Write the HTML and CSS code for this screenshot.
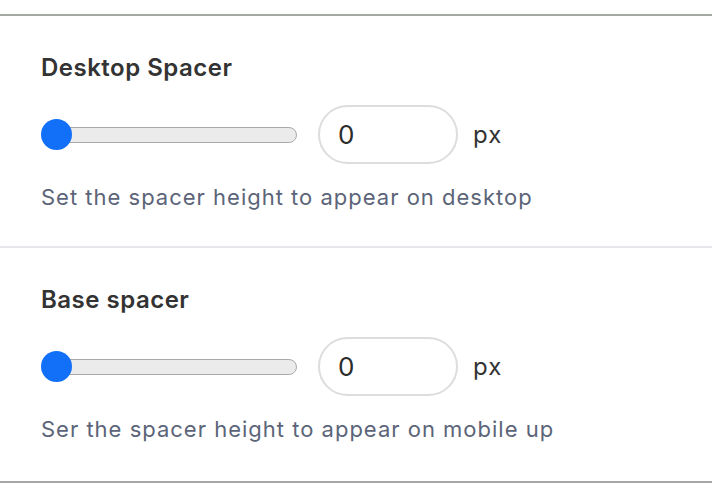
FILE: index.html
```html
<!DOCTYPE html>
<html>
<head>
<meta charset="utf-8">
<link rel="stylesheet" href="styles.css">
</head>
<body>
<div class="panel">
  <section class="field field-first">
    <h3 class="field-label">Desktop Spacer</h3>
    <div class="control-row">
      <div class="slider">
        <div class="slider-track"></div>
        <div class="slider-thumb"></div>
      </div>
      <div class="num-input">0</div>
      <span class="unit">px</span>
    </div>
    <p class="help">Set the spacer height to appear on desktop</p>
  </section>
  <section class="field field-second">
    <h3 class="field-label">Base spacer</h3>
    <div class="control-row">
      <div class="slider">
        <div class="slider-track"></div>
        <div class="slider-thumb"></div>
      </div>
      <div class="num-input">0</div>
      <span class="unit">px</span>
    </div>
    <p class="help">Ser the spacer height to appear on mobile up</p>
  </section>
</div>
</body>
</html>
```
FILE: styles.css
```css
html, body {
  margin: 0;
  padding: 0;
  background: #ffffff;
}
body {
  font-family: Inter, "Noto Sans", "Liberation Sans", sans-serif;
  padding-top: 14px;
}
.panel {
  border-top: 2px solid #a3a8a3;
  border-bottom: 2px solid #a6a6a6;
}
.field {
  padding: 38px 0 35px 41px;
  display: flex;
  flex-direction: column;
}
.field-first {
  border-bottom: 2px solid #e6e6eb;
}
.field-second {
  padding-bottom: 38px;
}
.field-label {
  margin: 0;
  font-size: 24px;
  line-height: 28px;
  font-weight: 600;
  letter-spacing: 0.5px;
  color: #333333;
}
.control-row {
  display: flex;
  align-items: center;
  height: 59px;
  margin: 23px 0 19px;
}
.slider {
  position: relative;
  width: 256px;
  height: 31px;
  display: flex;
  align-items: center;
}
.slider-track {
  margin-left: 14px;
  flex: 1;
  height: 16px;
  box-sizing: border-box;
  border: 1.5px solid #aaaaaa;
  border-radius: 8px;
  background: #ebebeb;
}
.slider-thumb {
  position: absolute;
  left: 0;
  top: 0;
  width: 31px;
  height: 31px;
  border-radius: 50%;
  background: #126ff7;
}
.num-input {
  margin-left: 21px;
  width: 140px;
  height: 59px;
  box-sizing: border-box;
  border: 2px solid #dddddd;
  border-radius: 30px;
  padding-left: 18px;
  display: flex;
  align-items: center;
  font-size: 26px;
  color: #2b2b2b;
}
.unit {
  margin-left: 15px;
  font-size: 24px;
  letter-spacing: 1px;
  color: #333333;
}
.help {
  margin: 0;
  font-size: 22px;
  line-height: 28px;
  letter-spacing: 1px;
  color: #5b6478;
}
```
